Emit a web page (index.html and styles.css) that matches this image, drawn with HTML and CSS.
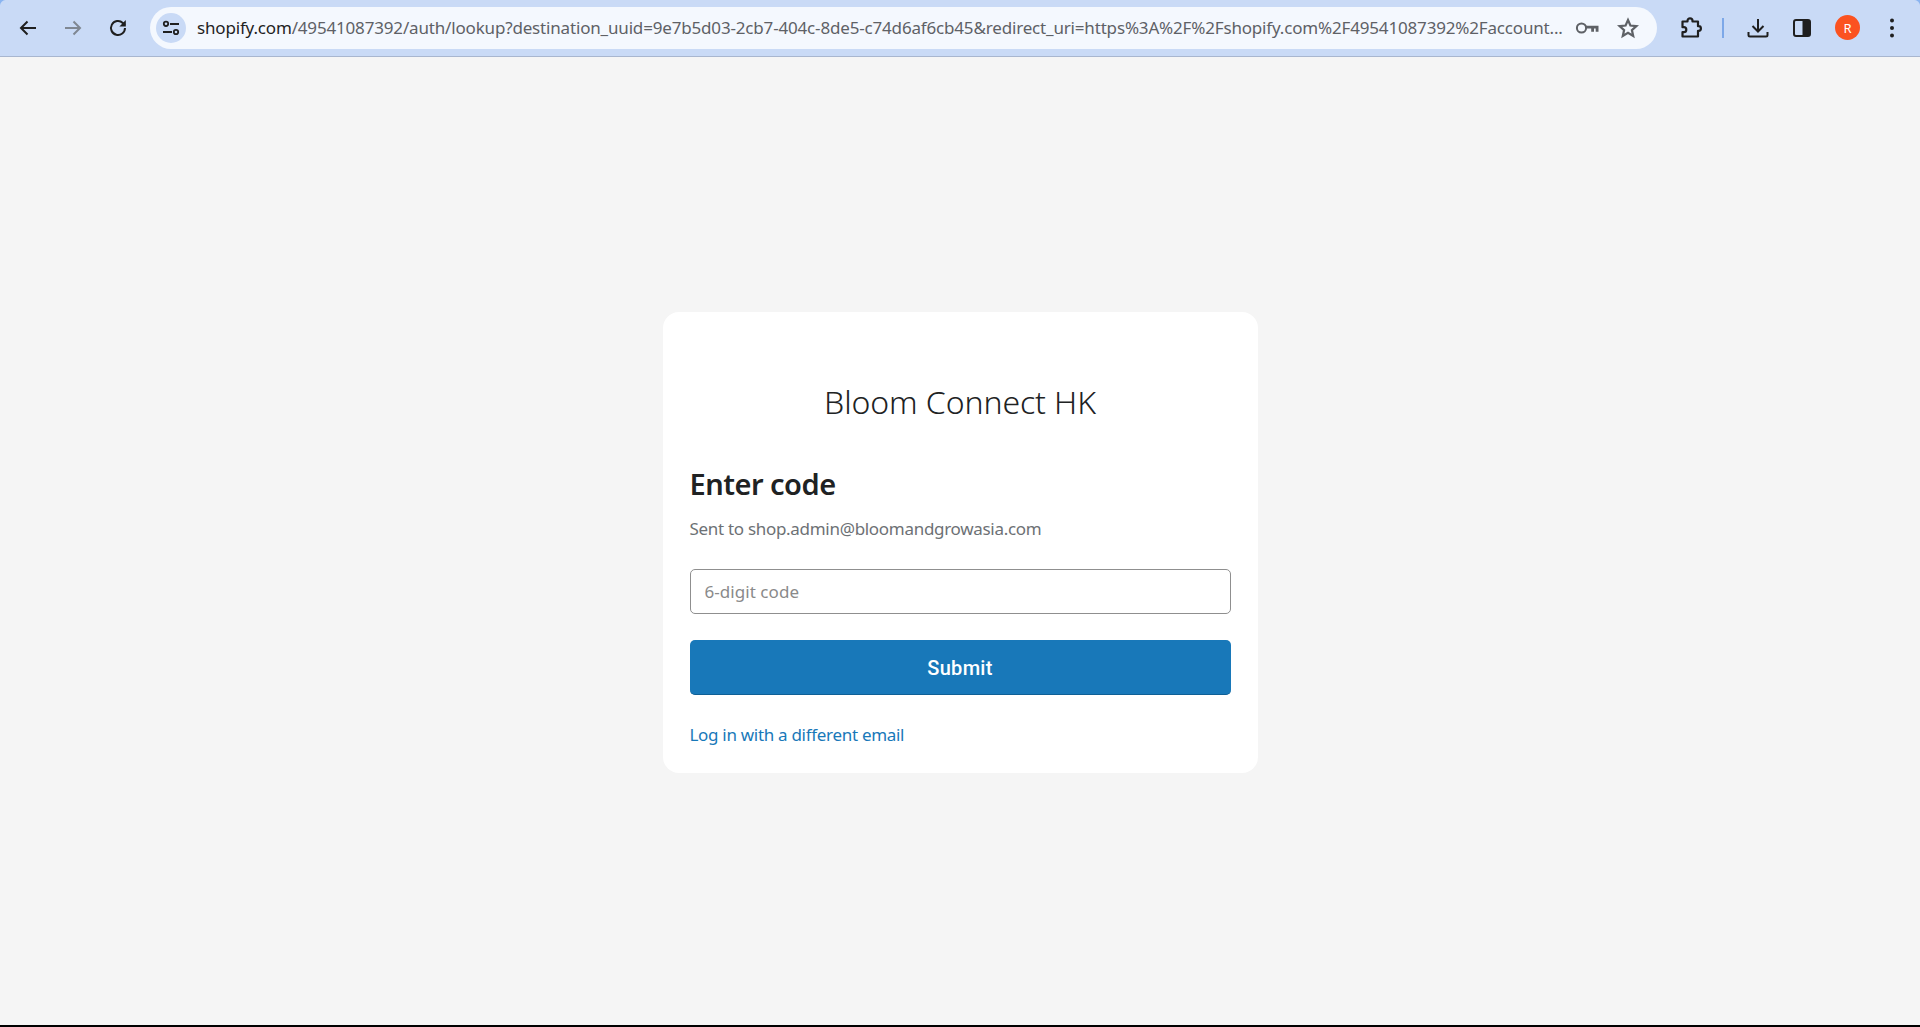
FILE: index.html
```html
<!DOCTYPE html>
<html lang="en">
<head>
    <meta charset="UTF-8">
    <meta name="viewport" content="width=device-width, initial-scale=1.0">
    <title>Enter code</title>
    <link rel="stylesheet" href="styles.css">
</head>
<body>
    <!-- Browser toolbar -->
    <div class="toolbar">
        <div class="nav-buttons">
            <svg class="icon" viewBox="0 0 24 24"><path d="M20 12H5M11.500 5.500 5 12l6.500 6.500" fill="none" stroke="#1f1f1f" stroke-width="2"/></svg>
            <svg class="icon" viewBox="0 0 24 24"><path d="M4 12h15M12.500 5.500 19 12l-6.500 6.500" fill="none" stroke="#7f8792" stroke-width="2"/></svg>
            <svg class="icon" viewBox="0 0 24 24"><path d="M19 12a7 7 0 1 1-2.200-5.100L19 9" fill="none" stroke="#1f1f1f" stroke-width="2"/><path d="M19.800 4v6.400h-6.400z" fill="#1f1f1f"/></svg>
        </div>
        <div class="omnibox">
            <span class="site-chip">
                <svg viewBox="0 0 20 20" width="20" height="20"><path d="M9 6h9M2 14h9" fill="none" stroke="#1f1f1f" stroke-width="2"/><circle cx="15" cy="14" r="2.200" fill="none" stroke="#1f1f1f" stroke-width="1.800"/><circle cx="5" cy="5.800" r="2.200" fill="none" stroke="#1f1f1f" stroke-width="1.800"/></svg>
            </span>
            <div class="url"><span class="url-host">shopify.com</span>/49541087392/auth/lookup?destination_uuid=9e7b5d03-2cb7-404c-8de5-c74d6af6cb45&amp;redirect_uri=https%3A%2F%2Fshopify.com%2F49541087392%2Faccount...</div>
            <svg class="icon key" viewBox="0 0 24 24"><circle cx="6.500" cy="12" r="4.600" fill="none" stroke="#5e6166" stroke-width="2"/><path d="M11 9.700h12.500v6h-2.800v-3.300h-1.700v3.300h-2.800v-3.300H11z" fill="#5e6166"/></svg>
            <svg class="icon star" viewBox="0 0 24 24"><path d="m12 4 2.400 5.500 6 .6-4.500 4 1.300 5.900-5.200-3.100-5.200 3.100 1.300-5.900-4.500-4 6-.6z" fill="none" stroke="#5e6166" stroke-width="2.200"/></svg>
        </div>
        <div class="toolbar-actions">
            <svg class="icon" viewBox="0 0 24 24"><path d="M8.500 5.500V4.800a2.500 2.500 0 0 1 5 0v.7h5.500v4.700h.6a2.300 2.300 0 0 1 0 4.600H19V20.500H3.500v-4.300h1.300a2.500 2.500 0 0 0 0-5H3.500V5.500z" fill="none" stroke="#1f1f1f" stroke-width="2.200" stroke-linejoin="round"/></svg>
            <span class="divider"></span>
            <svg class="icon" viewBox="0 0 24 24"><path d="M12 3v12M6.500 10l5.500 5.500 5.500-5.500M2.500 16v3a1.500 1.500 0 0 0 1.500 1.500h16a1.500 1.500 0 0 0 1.500-1.500v-3" fill="none" stroke="#1f1f1f" stroke-width="2"/></svg>
            <svg class="icon" viewBox="0 0 24 24"><rect x="4" y="4" width="16" height="16" rx="2" fill="none" stroke="#1f1f1f" stroke-width="2"/><rect x="12.500" y="4" width="7.500" height="16" fill="#1f1f1f"/></svg>
            <span class="avatar">R</span>
            <svg class="icon" viewBox="0 0 24 24"><circle cx="12" cy="4.500" r="2" fill="#1f1f1f"/><circle cx="12" cy="12" r="2" fill="#1f1f1f"/><circle cx="12" cy="19.500" r="2" fill="#1f1f1f"/></svg>
        </div>
    </div>

    <!-- Login card -->
    <main class="page">
        <div class="card">
            <div class="shop-name">Bloom Connect HK</div>
            <h1>Enter code</h1>
            <p class="sent-to">Sent to shop.admin@bloomandgrowasia.com</p>
            <input class="code-input" type="text" placeholder="6-digit code">
            <button class="submit" type="button">Submit</button>
            <a class="other-email" href="#">Log in with a different email</a>
        </div>
    </main>
</body>
</html>
```

FILE: styles.css
```css
* {
    box-sizing: border-box;
}
html, body {
    height: 100%;
}
body {
    display: flex;
    flex-direction: column;
    margin: 0;
    background-color: #f5f5f5;
    border-bottom: 2px solid #000;
    font-family: "Noto Sans", Arial, sans-serif;
    color: #202223;
    overflow: hidden;
}
.toolbar {
    position: relative;
    display: flex;
    align-items: center;
    flex: none;
    height: 57px;
    padding: 0 0 1px 16px;
    background-color: #c9daf6;
    border-bottom: 1px solid #a8b6cf;
}
/* window corners showing behind the toolbar */
.toolbar::before,
.toolbar::after {
    content: "";
    position: absolute;
    top: 0;
    width: 6px;
    height: 6px;
}
.toolbar::before {
    left: 0;
    background: radial-gradient(circle at 100% 100%, transparent 5.500px, #8ab4f0 6.500px);
}
.toolbar::after {
    right: 0;
    background: radial-gradient(circle at 0 100%, transparent 5.500px, #8ab4f0 6.500px);
}
.icon {
    display: block;
    width: 24px;
    height: 24px;
    flex: none;
}
.nav-buttons {
    display: flex;
    gap: 21px;
}
.omnibox {
    display: flex;
    align-items: center;
    width: 1507px;
    height: 42px;
    margin-left: 20px;
    padding: 0 17px 0 6px;
    background-color: #f4f8fe;
    border-radius: 21px;
}
.site-chip {
    display: flex;
    align-items: center;
    justify-content: center;
    flex: none;
    width: 30px;
    height: 30px;
    background-color: #c9daf6;
    border-radius: 50%;
}
.url {
    flex: 1;
    margin-left: 11px;
    overflow: hidden;
    white-space: nowrap;
    font-size: 17px;
    letter-spacing: -0.17px;
    color: #5e6166;
}
.url-host {
    color: #1f1f1f;
}
.key {
    margin-left: 11px;
}
.star {
    margin-left: 17px;
}
.toolbar-actions {
    display: flex;
    align-items: center;
    margin-left: 22px;
}
.toolbar-actions .divider {
    width: 2px;
    height: 20px;
    margin: 0 22px 0 19px;
    background-color: #7da8e8;
}
.toolbar-actions .icon + .icon {
    margin-left: 20px;
}
.avatar {
    display: flex;
    align-items: center;
    justify-content: center;
    width: 25px;
    height: 25px;
    margin: 0 20px 0 21px;
    background-color: #fb5220;
    border-radius: 50%;
    color: #fff;
    font-size: 13px;
}
.page {
    flex: 1;
}
.card {
    display: flex;
    flex-direction: column;
    width: 595px;
    height: 461px;
    margin: 255px auto 0;
    padding: 64px 26px 0 26px;
    background-color: #fff;
    border-radius: 16px;
}
.shop-name {
    font-size: 32px;
    line-height: 52px;
    letter-spacing: -0.1px;
    font-weight: 300;
    text-align: center;
}
h1 {
    margin: 36px 0 0 1px;
    font-size: 29px;
    line-height: 40px;
    font-weight: 600;
    letter-spacing: -0.5px;
}
.sent-to {
    margin: 13px 0 0 1px;
    font-size: 17px;
    line-height: 24px;
    letter-spacing: -0.3px;
    color: #6d7175;
}
.code-input {
    height: 45px;
    margin: 28px 1px 0;
    padding: 0 14px;
    border: 1px solid #8f8f8f;
    border-radius: 5px;
    font: inherit;
    font-size: 17px;
    letter-spacing: 0.05px;
}
.code-input::placeholder {
    color: #8a8a8a;
    opacity: 1;
}
.submit {
    height: 55px;
    margin: 26px 1px 0;
    padding: 2px 0 0;
    border: 0;
    border-bottom: 1px solid #0f5f95;
    border-radius: 5px;
    background-color: #1878b9;
    color: #fff;
    font-family: Roboto, Arial, sans-serif;
    font-size: 20px;
    font-weight: 500;
    letter-spacing: 0.3px;
}
.other-email {
    margin: 28px 1px 0;
    font-size: 17px;
    line-height: 24px;
    letter-spacing: -0.3px;
    color: #1878b9;
    text-decoration: none;
}
```
